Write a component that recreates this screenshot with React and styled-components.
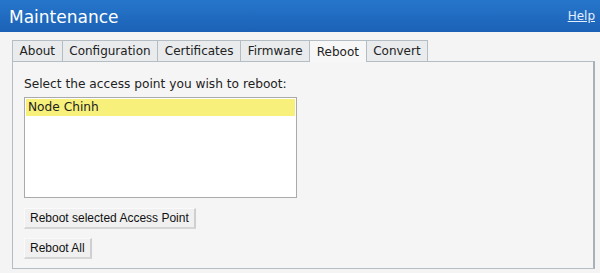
import styled, { createGlobalStyle } from 'styled-components'

const GlobalStyle = createGlobalStyle`
  html, body {
    margin: 0;
    padding: 0;
    background: #f4f4f4;
  }
`

const Page = styled.div`
  width: 600px;
  height: 273px;
  background: #f4f4f4;
  font-family: "DejaVu Sans", Verdana, sans-serif;
  overflow: hidden;
`

const Header = styled.header`
  height: 32px;
  display: flex;
  align-items: center;
  justify-content: space-between;
  padding: 1px 5px 0 9px;
  box-sizing: border-box;
  background: linear-gradient(#2676cc, #1b62b6);
`

const Title = styled.h1`
  margin: 0;
  font-size: 17px;
  font-weight: normal;
  color: #ffffff;
`

const HelpLink = styled.a`
  font-size: 12px;
  color: #e4eeff;
  text-decoration: underline;
  margin-top: -2px;
`

const Body = styled.div`
  padding: 8px 5px 0 12px;
`

const TabRow = styled.div`
  display: flex;
  height: 22px;
`

const Tab = styled.div`
  display: flex;
  align-items: center;
  padding: 0 6.6px;
  font-size: 12px;
  color: #222;
  border: 1px solid #b4bcc4;
  border-left: ${p => (p.$first ? '1px solid #b4bcc4' : 'none')};
  border-bottom: ${p => (p.$active ? 'none' : '1px solid #b4bcc4')};
  background: ${p => (p.$active ? '#f7f7f7' : '#e9ebed')};
  position: relative;
  z-index: 1;
`

const Panel = styled.div`
  height: 208px;
  margin-top: -1px;
  border: 1px solid #b4bcc4;
  border-right: 2px solid #a8b0b8;
  background: #f5f5f5;
  padding: 15px 11px 0 11px;
  box-sizing: border-box;
  display: flex;
  flex-direction: column;
  align-items: flex-start;
`

const Label = styled.div`
  font-size: 12.2px;
  color: #222;
  margin-bottom: 6px;
`

const ListBox = styled.div`
  width: 273px;
  height: 101px;
  box-sizing: border-box;
  border: 1px solid #aaaaaa;
  background: #ffffff;
  padding: 1px;
`

const ListItem = styled.div`
  height: 17px;
  line-height: 17px;
  font-size: 12.2px;
  color: #222;
  padding-left: 2px;
  background: ${p => (p.$selected ? '#f7f07a' : 'transparent')};
`

const Button = styled.button`
  font-family: "Liberation Sans", Arial, sans-serif;
  font-size: 12px;
  color: #111;
  height: 21px;
  padding: 0 5px;
  margin-top: ${p => p.$gap}px;
  background: #f0f0f0;
  border: none;
  border-right: 2px solid #cfcfcf;
  border-bottom: 2px solid #d6d6d6;
  border-top: 1px solid #fafafa;
  border-left: 1px solid #fafafa;
`

const tabs = ['About', 'Configuration', 'Certificates', 'Firmware', 'Reboot', 'Convert']

export default function App() {
  return (
    <Page>
      <GlobalStyle />
      <Header>
        <Title>Maintenance</Title>
        <HelpLink href="#">Help</HelpLink>
      </Header>
      <Body>
        <TabRow>
          {tabs.map((t, i) => (
            <Tab key={t} $first={i === 0} $active={t === 'Reboot'}>{t}</Tab>
          ))}
        </TabRow>
        <Panel>
          <Label>Select the access point you wish to reboot:</Label>
          <ListBox>
            <ListItem $selected>Node Chinh</ListItem>
          </ListBox>
          <Button $gap={10}>Reboot selected Access Point</Button>
          <Button $gap={9}>Reboot All</Button>
        </Panel>
      </Body>
    </Page>
  )
}
